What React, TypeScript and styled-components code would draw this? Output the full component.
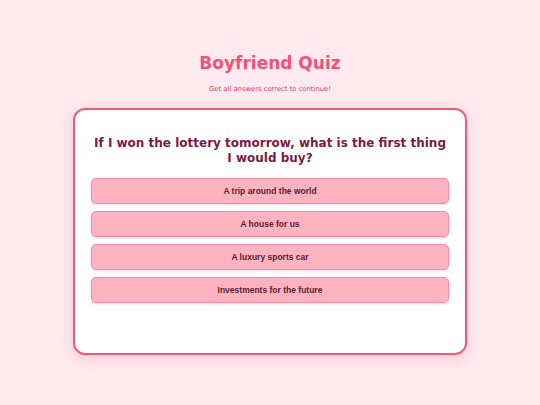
import styled, { createGlobalStyle } from "styled-components";

const GlobalStyle = createGlobalStyle`
  body {
    margin: 0;
    background: #ffebef;
    font-family: "DejaVu Sans", Verdana, sans-serif;
  }
`;

const Page = styled.div`
  width: 540px;
  height: 405px;
  display: flex;
  flex-direction: column;
  align-items: center;
  padding-top: 51px;
  box-sizing: border-box;
`;

const Title = styled.h1`
  margin: 0;
  color: #f2527a;
  font-size: 17px;
  font-weight: bold;
  line-height: 24px;
`;

const Subtitle = styled.p`
  margin: 10px 0 0;
  color: #cf3a62;
  font-size: 6.8px;
  line-height: 9px;
`;

const Card = styled.div`
  margin-top: 14px;
  width: 394px;
  height: 247px;
  box-sizing: border-box;
  background: #ffffff;
  border: 2px solid #f05a80;
  border-radius: 12px;
  box-shadow: 0 4px 15px rgba(240, 90, 128, 0.22);
  padding: 26px 16px 16px;
`;

const Question = styled.h2`
  margin: 0 0 12px;
  color: #7d1a3d;
  font-size: 12px;
  font-weight: bold;
  line-height: 15px;
  text-align: center;
`;

const Options = styled.div`
  display: flex;
  flex-direction: column;
  gap: 7px;
`;

const Option = styled.button`
  height: 26px;
  background: #ffb3c1;
  border: 1px solid #f28ca2;
  border-radius: 5px;
  box-shadow: 0 1px 3px rgba(200, 80, 110, 0.2);
  color: #5c1a2e;
  font-family: "Liberation Sans", Arial, sans-serif;
  font-weight: bold;
  font-size: 8.5px;
  cursor: pointer;
  &:hover {
    background: #ffa3b5;
  }
`;

const answers = [
  "A trip around the world",
  "A house for us",
  "A luxury sports car",
  "Investments for the future",
];

export default function App() {
  return (
    <Page>
      <GlobalStyle />
      <Title>Boyfriend Quiz</Title>
      <Subtitle>Get all answers correct to continue!</Subtitle>
      <Card>
        <Question>
          If I won the lottery tomorrow, what is the first thing I would buy?
        </Question>
        <Options>
          {answers.map((a) => (
            <Option key={a}>{a}</Option>
          ))}
        </Options>
      </Card>
    </Page>
  );
}
